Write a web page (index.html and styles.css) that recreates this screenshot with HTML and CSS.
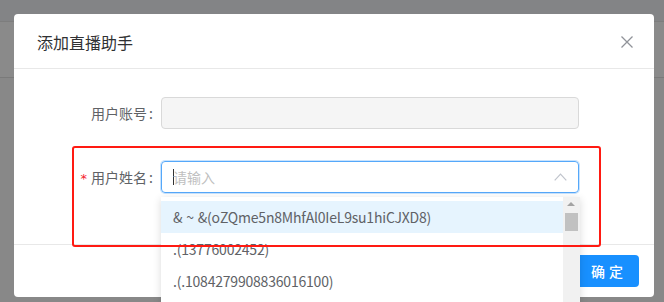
FILE: index.html
```html
<!DOCTYPE html>
<html lang="zh-CN">
<head>
<meta charset="utf-8">
<title>添加直播助手</title>
<link rel="stylesheet" href="styles.css">
</head>
<body>
<div class="backdrop">
  <div class="bg-top"></div>
  <div class="bg-band"></div>
</div>
<div class="dialog">
  <div class="dlg-header">
    <span class="dlg-title">添加直播助手</span>
    <span class="dlg-close">
      <svg width="12" height="12" viewBox="0 0 12 12"><path d="M0.5 0.5 L11.5 11.5 M11.5 0.5 L0.5 11.5" stroke="#909399" stroke-width="1.3" fill="none"/></svg>
    </span>
  </div>
  <div class="dlg-body">
    <div class="form-row">
      <label class="form-label">用户账号<span class="colon">:</span></label>
      <div class="input disabled"></div>
    </div>
    <div class="form-row">
      <label class="form-label"><span class="req">*</span>用户姓名<span class="colon">:</span></label>
      <div class="input focused">
        <span class="caret"></span>
        <span class="placeholder">请输入</span>
        <span class="arrow">
          <svg width="13" height="8" viewBox="0 0 13 8"><path d="M0.7 7.3 L6.5 1.2 L12.3 7.3" stroke="#c0c4cc" stroke-width="1.2" fill="none"/></svg>
        </span>
      </div>
    </div>
  </div>
  <div class="dlg-footer">
    <button class="btn-primary">确 定</button>
  </div>
</div>
<div class="dropdown">
  <ul class="options">
    <li class="option hover">&amp; ~ &amp;(oZQme5n8MhfAl0IeL9su1hiCJXD8)</li>
    <li class="option">.(13776002452)</li>
    <li class="option">.(.1084279908836016100)</li>
  </ul>
  <div class="scrollbar">
    <span class="sb-up"></span>
    <span class="sb-thumb"></span>
  </div>
</div>
<div class="highlight-box"></div>
</body>
</html>
```

FILE: styles.css
```css
* { box-sizing: border-box; }
html, body {
  margin: 0;
  padding: 0;
  width: 664px;
  height: 302px;
  overflow: hidden;
}
body {
  background: #888888;
  font-family: "Noto Sans CJK SC", "Noto Sans", sans-serif;
  position: relative;
}
.backdrop {
  position: absolute;
  inset: 0;
  z-index: 0;
}
.bg-top {
  height: 22px;
  background: #838486;
  border-bottom: 1px solid #7d7d7d;
}
.bg-band {
  height: 56px;
  background: #8a8a8a;
  border-bottom: 1px solid #7a7a7a;
}
.dialog {
  position: absolute;
  left: 14px;
  top: 14px;
  width: 640px;
  height: 283px;
  background: #fff;
  border-radius: 4px;
  z-index: 1;
  display: flex;
  flex-direction: column;
}
.dlg-header {
  height: 55px;
  border-bottom: 1px solid #e8e8e8;
  display: flex;
  align-items: center;
  justify-content: space-between;
  padding: 0 21px 0 23px;
}
.dlg-title {
  font-size: 16px;
  color: #303133;
  line-height: 24px;
  margin-top: 1px;
}
.dlg-close {
  display: flex;
  width: 12px;
  height: 12px;
  margin-top: 1px;
}
.dlg-body {
  height: 176px;
  padding-top: 28px;
  display: flex;
  flex-direction: column;
  gap: 32px;
  border-bottom: 1px solid #e8e8e8;
}
.form-row {
  display: flex;
  align-items: center;
  height: 32px;
}
.form-label {
  width: 147px;
  padding-right: 8px;
  text-align: right;
  font-size: 14px;
  color: #606266;
}
.colon {
  margin-left: 2px;
}
.req {
  color: #f5222d;
  font-family: "DejaVu Sans", sans-serif;
  font-size: 13px;
  margin-right: 4px;
}
.input {
  width: 418px;
  height: 32px;
  border: 1px solid #dcdfe6;
  border-radius: 4px;
  display: flex;
  align-items: center;
  padding: 0 11px;
  position: relative;
}
.input.disabled {
  background: #f5f5f5;
  border-color: #d9d9d9;
}
.input.focused {
  border-color: #55a8fa;
  box-shadow: 0 0 0 1px #c9e3fd;
}
.caret {
  width: 1px;
  height: 16px;
  background: #333;
  margin-right: -1px;
}
.placeholder {
  font-size: 14px;
  color: #bfbfbf;
}
.arrow {
  margin-left: auto;
  display: flex;
}
.dlg-footer {
  flex: 1;
  display: flex;
  justify-content: flex-end;
  align-items: flex-start;
  padding: 10px 15px 0 0;
}
.btn-primary {
  width: 64px;
  height: 32px;
  background: #1890ff;
  color: #fff;
  border: none;
  border-radius: 4px;
  font-family: "Noto Sans CJK SC", sans-serif;
  font-size: 14px;
  font-weight: 500;
  padding: 0;
  word-spacing: 1px;
}
.dropdown {
  position: absolute;
  left: 161px;
  top: 197px;
  width: 419px;
  height: 120px;
  background: #fff;
  box-shadow: 0 2px 8px rgba(0,0,0,0.15);
  z-index: 2;
  display: flex;
}
.options {
  list-style: none;
  margin: 0;
  padding: 4px 0 0 0;
  flex: 1;
}
.option {
  height: 32px;
  line-height: 33px;
  padding-left: 12px;
  font-size: 14px;
  color: #606266;
  white-space: nowrap;
  letter-spacing: -0.2px;
  word-spacing: 1px;
}
.option.hover {
  background: #e6f4fe;
}
.scrollbar {
  width: 17px;
  background: #f1f1f1;
  position: relative;
}
.sb-up {
  position: absolute;
  left: 4px;
  top: 5px;
  width: 0;
  height: 0;
  border-left: 4px solid transparent;
  border-right: 4px solid transparent;
  border-bottom: 4px solid #a3a3a3;
}
.sb-thumb {
  position: absolute;
  left: 2px;
  top: 16px;
  width: 13px;
  height: 18px;
  background: #c1c1c1;
}
.highlight-box {
  position: absolute;
  left: 72px;
  top: 146px;
  width: 529px;
  height: 101px;
  border: 2px solid #ff1a12;
  border-radius: 3px;
  z-index: 3;
}
```
